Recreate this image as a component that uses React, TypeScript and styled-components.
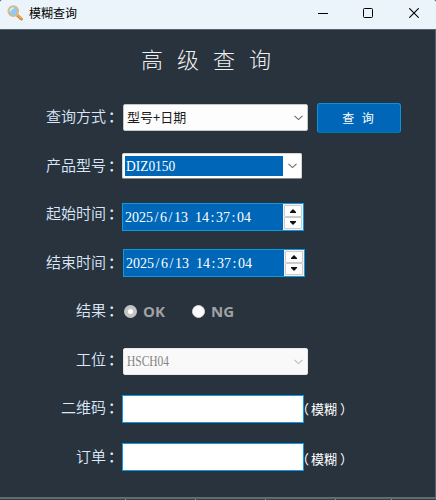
import React from "react";
import styled, { createGlobalStyle } from "styled-components";

const GlobalStyle = createGlobalStyle`
  * { box-sizing: border-box; }
  body { margin: 0; background: #28333e; overflow: hidden; }
`;

const cjk = `"Noto Sans CJK SC", sans-serif`;
const serif = `"Liberation Serif", "Noto Sans CJK SC", serif`;

const Window = styled.div`
  width: 436px;
  height: 500px;
  display: flex;
  flex-direction: column;
  background: #28333e;
  font-family: ${cjk};
  color: #dce8fa;
  white-space: nowrap;
`;

const TitleBar = styled.header`
  height: 29px;
  flex: none;
  display: flex;
  align-items: center;
  background: #ebf4fa;
  color: #000;
  padding: 0 0 3px 7px;
  border-radius: 2px 2px 0 0;
`;

const Caption = styled.span`
  flex: 1;
  margin: 0 0 0 6px;
  font-size: 12px;
  line-height: 18px;
`;

const CaptionButton = styled.button`
  width: 45.5px;
  height: 26px;
  padding: 0 0 0 1px;
  border: 0;
  background: none;
  display: flex;
  align-items: center;
  justify-content: center;
`;

const Client = styled.main`
  flex: 1;
  border-top: 1px solid #55626b;
  border-right: 1px solid #58616a;
`;

const Heading = styled.h1`
  margin: 0;
  height: 63px;
  padding: 11px 0 0 141px;
  font-size: 22px;
  font-weight: 300;
  line-height: 34px;
  letter-spacing: 14px;
  color: #f0f0ee;
`;

const Form = styled.form`
  display: grid;
  grid-template-rows: 49px 48px 49px 48px 49px 48px 49px 48px;
`;

const Row = styled.div`
  display: flex;
  align-items: flex-start;
`;

const Label = styled.label`
  width: 122px;
  padding: 11px 1px 0 0;
  text-align: right;
  font-size: 15px;
  line-height: 24px;
  font-weight: 350;
  flex: none;
`;

const Colon = styled.span`
  display: inline-block;
  width: 15px;
  padding-left: 2px;
  text-align: left;
  font-weight: 500;
`;

const Select = styled.div<{ $top: number; $muted?: boolean }>`
  width: 185px;
  height: 27px;
  margin: ${(p) => p.$top}px 0 0 1px;
  padding: 0 4px 0 3px;
  display: flex;
  align-items: center;
  justify-content: space-between;
  background: ${(p) => (p.$muted ? "#f9f9f9" : "#fdfdfd")};
  border: 1px solid ${(p) => (p.$muted ? "#e6e8e9" : "#c4c6c8")};
  border-radius: 2px;
  color: ${(p) => (p.$muted ? "#838383" : "#1c1c1c")};
  font-size: 13px;
  line-height: 20px;
`;

const Choice = styled.span`
  padding-bottom: 1px;
`;

const EditSelect = styled.div`
  width: 180px;
  height: 26px;
  margin-top: 11px;
  padding: 2px 4px 3px 2px;
  display: flex;
  align-items: center;
  justify-content: space-between;
  background: #fff;
  border: 1px solid #d4d6d8;
  border-bottom-color: #85898c;
  border-radius: 2px;
`;

const Value = styled.span<{ $squeeze?: number }>`
  display: inline-block;
  padding-top: 1px;
  font-family: ${serif};
  font-size: 14px;
  line-height: 20px;
  white-space: pre;
  transform: scaleX(${(p) => p.$squeeze ?? 1});
  transform-origin: left;
`;

const Mark = styled.span`
  display: inline-block;
  width: 7px;
  text-align: center;
`;

const Selection = styled.div`
  width: 158px;
  height: 20px;
  padding: 0 0 0 1px;
  background: #0067b8;
  color: #fff;
  display: flex;
`;

const DateBox = styled.div<{ $top: number; $left: number }>`
  width: 182px;
  height: 28px;
  margin: ${(p) => p.$top}px 0 0 ${(p) => p.$left}px;
  padding-left: 2px;
  display: flex;
  align-items: center;
  justify-content: space-between;
  background: #0067b8;
  border: 1px solid #0a9ae6;
  color: #fff;
`;

const Spinner = styled.div`
  width: 20px;
  height: 26px;
  padding: 1px;
  background: #f0f0f0;
  display: grid;
  grid-template-rows: 1fr 1fr;
`;

const SpinButton = styled.button`
  padding: 0;
  border: 1px solid #cccccc;
  border-radius: 1px;
  background: #fdfdfd;
  display: flex;
  align-items: center;
  justify-content: center;
`;

const QueryButton = styled.button`
  width: 84px;
  height: 30px;
  margin: 10px 0 0 9px;
  padding: 0 2px 0 0;
  background: #0067b8;
  border: 1px solid #0a94dc;
  border-bottom-color: #0078b4;
  border-radius: 3px;
  color: #fff;
  font-family: ${cjk};
  font-size: 12px;
  line-height: 18px;
  white-space: pre;
  word-spacing: 5px;
`;

const Radio = styled.span<{ $width: number }>`
  width: ${(p) => p.$width}px;
  margin: 12px 0 0 2px;
  height: 24px;
  display: flex;
  align-items: center;
  gap: 6px;
  color: #a0a2a4;
  font: 700 15px/24px "Open Sans", sans-serif;
`;

const Dot = styled.i<{ $checked?: boolean }>`
  width: 13px;
  height: 13px;
  border-radius: 50%;
  background: ${(p) => (p.$checked ? "#fff" : "#fbfbfb")};
  border: ${(p) => (p.$checked ? "4px solid #c4c4c4" : "1px solid #d8d8d8")};
`;

const TextBox = styled.input<{ $top: number }>`
  width: 182px;
  height: 28px;
  margin: ${(p) => p.$top}px 0 0;
  border: 1px solid #0a9ae6;
  background: #fff;
  outline: none;
`;

const HintText = styled.span<{ $top: number }>`
  margin: ${(p) => p.$top}px 0 0 -8px;
  font-size: 13px;
  line-height: 20px;
  color: #fff;
`;

const HintWord = styled.span`
  margin: 0 3px 0 2px;
`;

const Taskline = styled.footer`
  height: 3px;
  flex: none;
  display: grid;
  grid-template-columns: 126px 70px 70px 70px 56px 1fr;
  border-top: 2px solid #626a71;
  background: #343d45;
`;

const Segment = styled.i`
  border-right: 1px solid #8b9094;
`;

const Chevron = ({ color = "#6a6a6a" }: { color?: string }) => (
  <svg width="9" height="6" viewBox="0 0 9 6" fill="none" stroke={color} strokeWidth="1.1">
    <path d="M.5 .8 4.5 4.6 8.5 .8" />
  </svg>
);

const Spin = () => (
  <Spinner>
    <SpinButton type="button">
      <svg width="6" height="4"><path d="M0 4V3L3 0l3 3v1z" fill="#111" /></svg>
    </SpinButton>
    <SpinButton type="button">
      <svg width="6" height="4"><path d="M0 0V1L3 4l3-3V0z" fill="#111" /></svg>
    </SpinButton>
  </Spinner>
);

const Magnifier = () => (
  <svg width="16" height="16" viewBox="0 0 16 16">
    <path d="M10 10l4.3 4" stroke="#c47a2c" strokeWidth="3" strokeLinecap="round" />
    <path d="M10.2 9.8l4 3.8" stroke="#f3a94c" strokeWidth="1.6" strokeLinecap="round" />
    <circle cx="6.3" cy="6.2" r="5" fill="#8ecbf5" stroke="#e3b878" strokeWidth="1.7" />
    <path d="M3.3 6.2a3 3 0 0 1 3.4-3" stroke="#d8f0ff" strokeWidth="1.6" fill="none" />
  </svg>
);

const Timestamp = () => (
  <Value>
    2025<Mark>/</Mark>6<Mark>/</Mark>13<Mark> </Mark>14<Mark>:</Mark>37<Mark>:</Mark>04
  </Value>
);

const Field = ({ name }: { name: string }) => (
  <Label>{name}<Colon>：</Colon></Label>
);

const Hint = ({ top }: { top: number }) => (
  <HintText $top={top}>（<HintWord>模糊</HintWord>）</HintText>
);

export default function App() {
  return (
    <Window>
      <GlobalStyle />
      <TitleBar>
        <Magnifier />
        <Caption>模糊查询</Caption>
        <CaptionButton>
          <svg width="10" height="10"><path d="M0 5.5h10" stroke="#000" /></svg>
        </CaptionButton>
        <CaptionButton>
          <svg width="10" height="10"><rect x=".5" y=".5" width="9" height="9" rx="1" fill="none" stroke="#000" /></svg>
        </CaptionButton>
        <CaptionButton>
          <svg width="10" height="10"><path d="M.3.3l9.4 9.4M9.7.3.3 9.7" stroke="#000" strokeWidth="1.1" /></svg>
        </CaptionButton>
      </TitleBar>
      <Client>
        <Heading>高级查询</Heading>
        <Form>
          <Row>
            <Field name="查询方式" />
            <Select $top={11}><Choice>型号+日期</Choice><Chevron /></Select>
            <QueryButton type="button">查 询</QueryButton>
          </Row>
          <Row>
            <Field name="产品型号" />
            <EditSelect>
              <Selection><Value $squeeze={0.96}>DIZ0150</Value></Selection>
              <Chevron />
            </EditSelect>
          </Row>
          <Row>
            <Field name="起始时间" />
            <DateBox $top={13} $left={0}><Timestamp /><Spin /></DateBox>
          </Row>
          <Row>
            <Field name="结束时间" />
            <DateBox $top={10} $left={1}><Timestamp /><Spin /></DateBox>
          </Row>
          <Row>
            <Field name="结果" />
            <Radio $width={66}><Dot $checked />OK</Radio>
            <Radio $width={66}><Dot />NG</Radio>
          </Row>
          <Row>
            <Field name="工位" />
            <Select $top={12} $muted><Value $squeeze={0.82}>HSCH04</Value><Chevron color="#bbb" /></Select>
          </Row>
          <Row>
            <Field name="二维码" />
            <TextBox $top={11} />
            <Hint top={15} />
          </Row>
          <Row>
            <Field name="订单" />
            <TextBox $top={10} />
            <Hint top={16} />
          </Row>
        </Form>
      </Client>
      <Taskline>
        <Segment /><Segment /><Segment /><Segment /><Segment />
      </Taskline>
    </Window>
  );
}
